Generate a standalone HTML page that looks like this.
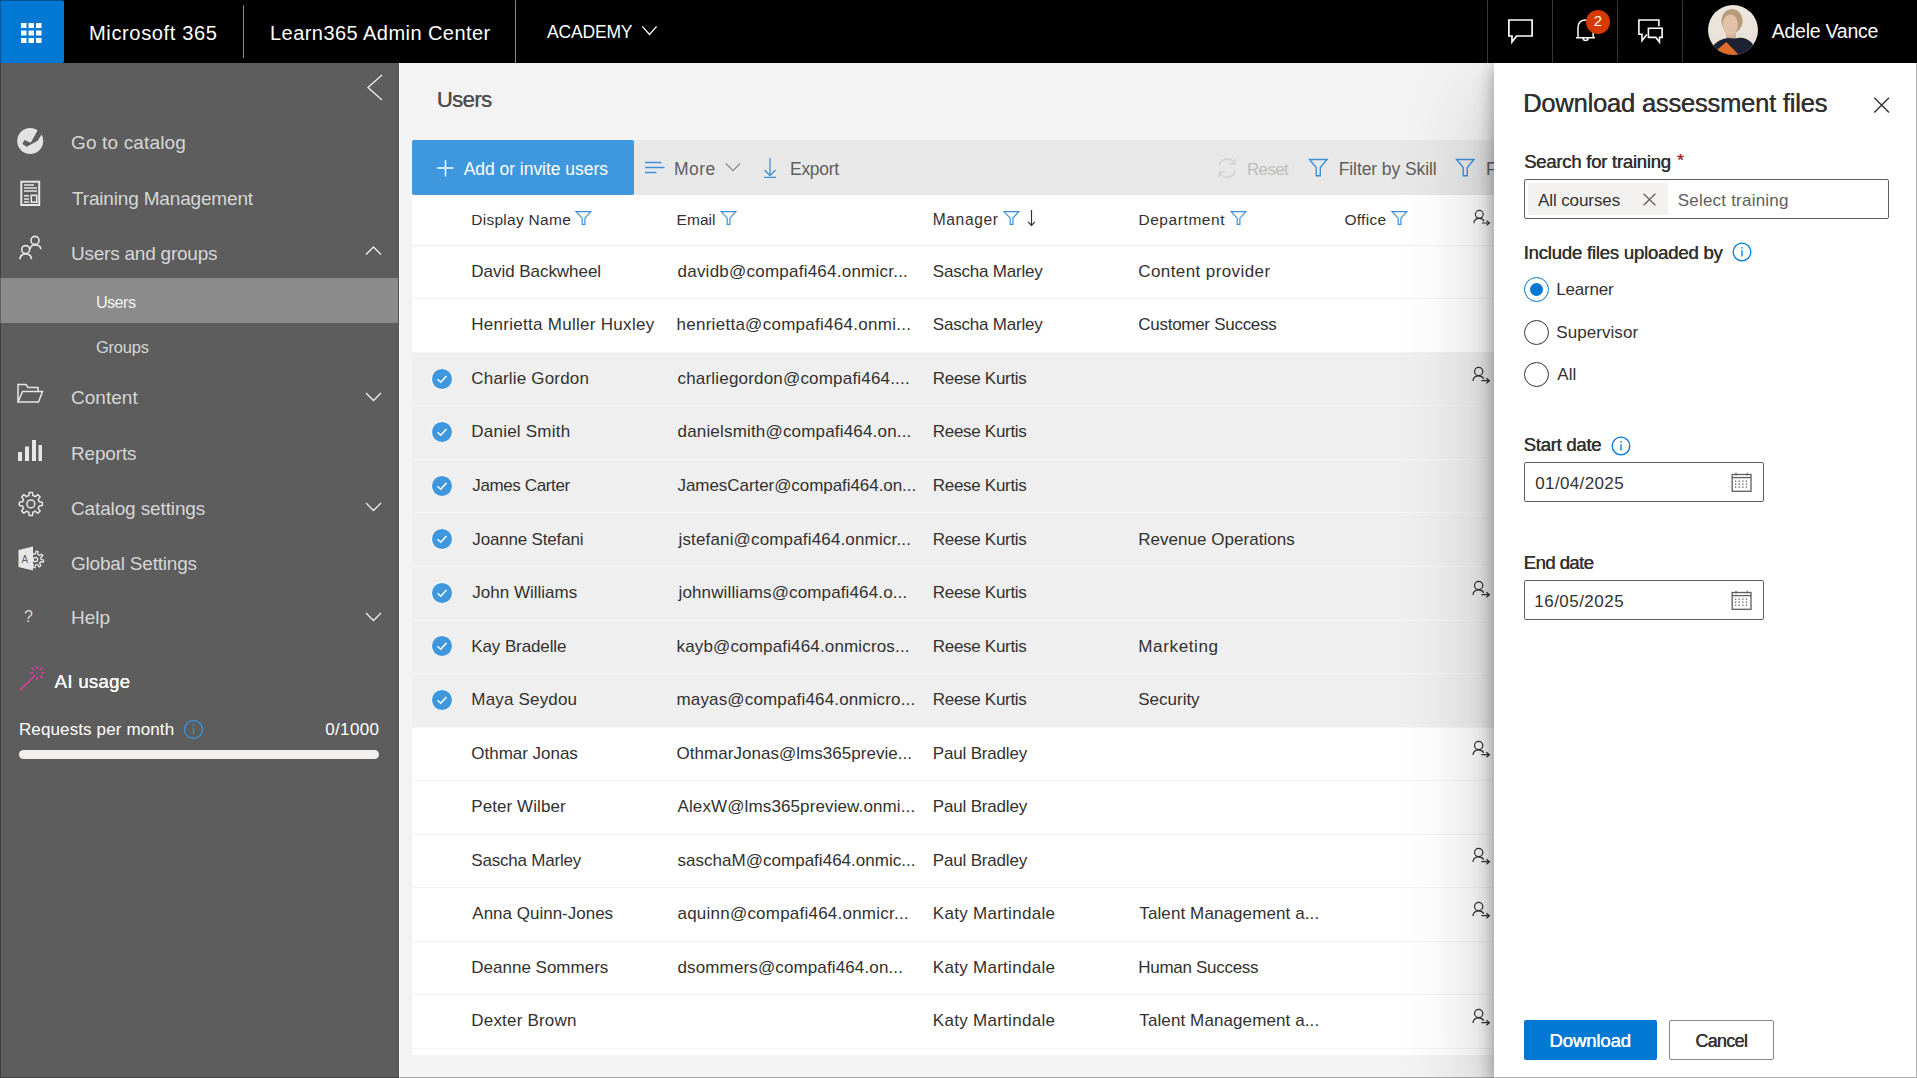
<!DOCTYPE html>
<html><head><meta charset='utf-8'><style>
html,body{margin:0;padding:0;}
body{width:1917px;height:1078px;position:relative;overflow:hidden;background:#fff;font-family:"Liberation Sans", sans-serif;}
.t{position:absolute;white-space:nowrap;line-height:1;font-family:"Liberation Sans", sans-serif;}
svg{display:block}
</style></head><body>
<div style='position:absolute;left:0px;top:0px;width:1917px;height:63px;background:#000;'></div>
<div style='position:absolute;left:0px;top:0px;width:64px;height:63px;background:#0078d4;border-radius:0 2px 2px 0'></div>
<div style='position:absolute;left:0px;top:63px;width:399px;height:1015px;background:#5d5d5d;'></div>
<div style='position:absolute;left:400px;top:63px;width:1094px;height:1015px;background:#f3f3f3;'></div>
<div style='position:absolute;left:243px;top:5px;width:1px;height:53px;background:#8a8a8a;'></div>
<div style='position:absolute;left:515px;top:0px;width:1px;height:63px;background:#8a8a8a;'></div>
<div style='position:absolute;left:1487px;top:0px;width:1px;height:63px;background:#3b3b3b;'></div>
<div style='position:absolute;left:1552px;top:0px;width:1px;height:63px;background:#3b3b3b;'></div>
<div style='position:absolute;left:1617px;top:0px;width:1px;height:63px;background:#3b3b3b;'></div>
<div style='position:absolute;left:1682px;top:0px;width:1px;height:63px;background:#3b3b3b;'></div>
<div style='position:absolute;left:398px;top:63px;width:1px;height:1015px;background:#545454;'></div>
<div style='position:absolute;left:399px;top:63px;width:1px;height:1015px;background:#fcfcfc;'></div>
<div style='position:absolute;left:0px;top:278px;width:398px;height:45px;background:#8b8b8b;'></div>
<div style='position:absolute;left:19px;top:750px;width:360px;height:9px;background:#f1f0ef;border-radius:5px'></div>
<div style='position:absolute;left:412px;top:140px;width:1082px;height:55px;background:#e8e8e8;'></div>
<div style='position:absolute;left:412px;top:195px;width:1082px;height:860px;background:#fff;'></div>
<div style='position:absolute;left:412px;top:140px;width:222px;height:55px;background:#3f97dd;border-radius:2px'></div>
<div style='position:absolute;left:412px;top:245px;width:1082px;height:1px;background:#f0f0f0;'></div>
<div style='position:absolute;left:412px;top:353.06px;width:1082px;height:53.53px;background:#efefef;'></div>
<div style='position:absolute;left:412px;top:406.59px;width:1082px;height:53.53px;background:#efefef;'></div>
<div style='position:absolute;left:412px;top:460.12px;width:1082px;height:53.53px;background:#efefef;'></div>
<div style='position:absolute;left:412px;top:513.6500000000001px;width:1082px;height:53.53px;background:#efefef;'></div>
<div style='position:absolute;left:412px;top:567.1800000000001px;width:1082px;height:53.53px;background:#efefef;'></div>
<div style='position:absolute;left:412px;top:620.71px;width:1082px;height:53.53px;background:#efefef;'></div>
<div style='position:absolute;left:412px;top:674.24px;width:1082px;height:53.53px;background:#efefef;'></div>
<div class='t' style='left:1486.00px;top:161px;font-size:17.5px;color:#605e5c;'>F</div>
<div style='position:absolute;left:412px;top:298px;width:1082px;height:1px;background:#f3f3f3;'></div>
<div style='position:absolute;left:412px;top:352px;width:1082px;height:1px;background:#f3f3f3;'></div>
<div style='position:absolute;left:412px;top:405px;width:1082px;height:1px;background:#f6f6f6;'></div>
<div style='position:absolute;left:412px;top:459px;width:1082px;height:1px;background:#f6f6f6;'></div>
<div style='position:absolute;left:412px;top:512px;width:1082px;height:1px;background:#f6f6f6;'></div>
<div style='position:absolute;left:412px;top:566px;width:1082px;height:1px;background:#f6f6f6;'></div>
<div style='position:absolute;left:412px;top:620px;width:1082px;height:1px;background:#f6f6f6;'></div>
<div style='position:absolute;left:412px;top:673px;width:1082px;height:1px;background:#f6f6f6;'></div>
<div style='position:absolute;left:412px;top:727px;width:1082px;height:1px;background:#f6f6f6;'></div>
<div style='position:absolute;left:412px;top:780px;width:1082px;height:1px;background:#f3f3f3;'></div>
<div style='position:absolute;left:412px;top:834px;width:1082px;height:1px;background:#f3f3f3;'></div>
<div style='position:absolute;left:412px;top:887px;width:1082px;height:1px;background:#f3f3f3;'></div>
<div style='position:absolute;left:412px;top:941px;width:1082px;height:1px;background:#f3f3f3;'></div>
<div style='position:absolute;left:412px;top:994px;width:1082px;height:1px;background:#f3f3f3;'></div>
<div style='position:absolute;left:412px;top:1048px;width:1082px;height:1px;background:#f3f3f3;'></div>
<div style='position:absolute;left:412px;top:1048px;width:1082px;height:1px;background:#f3f3f3;'></div>
<div class='t' style='left:88.99px;top:23px;font-size:20.13px;color:#fff;letter-spacing:0.600px;'>Microsoft 365</div>
<div class='t' style='left:270.00px;top:23px;font-size:20px;color:#fff;letter-spacing:0.450px;'>Learn365 Admin Center</div>
<div class='t' style='left:547.00px;top:24px;font-size:17.5px;color:#fff;letter-spacing:-0.167px;'>ACADEMY</div>
<div class='t' style='left:1771.70px;top:22px;font-size:19.5px;color:#fff;letter-spacing:-0.240px;'>Adele Vance</div>
<div class='t' style='left:71.00px;top:133px;font-size:19px;color:#d6d6d6;letter-spacing:0.150px;'>Go to catalog</div>
<div class='t' style='left:72.00px;top:189px;font-size:19px;color:#d6d6d6;letter-spacing:-0.167px;'>Training Management</div>
<div class='t' style='left:71.00px;top:244px;font-size:19px;color:#d6d6d6;letter-spacing:-0.233px;'>Users and groups</div>
<div class='t' style='left:95.91px;top:294px;font-size:16.3px;color:#f2f2f2;letter-spacing:-0.600px;'>Users</div>
<div class='t' style='left:95.90px;top:339px;font-size:16.5px;color:#d6d6d6;letter-spacing:-0.180px;'>Groups</div>
<div class='t' style='left:71.00px;top:388px;font-size:19px;color:#d6d6d6;letter-spacing:0.033px;'>Content</div>
<div class='t' style='left:71.00px;top:444px;font-size:19px;color:#d6d6d6;letter-spacing:-0.167px;'>Reports</div>
<div class='t' style='left:71.00px;top:499px;font-size:19px;color:#d6d6d6;letter-spacing:-0.133px;'>Catalog settings</div>
<div class='t' style='left:71.00px;top:554px;font-size:19px;color:#d6d6d6;letter-spacing:-0.200px;'>Global Settings</div>
<div class='t' style='left:71.00px;top:608px;font-size:19px;color:#d6d6d6;'>Help</div>
<div class='t' style='left:24.00px;top:609px;font-size:16px;color:#d6d6d6;'>?</div>
<div class='t' style='left:54.60px;top:673px;font-size:18.5px;color:#fff;letter-spacing:0.329px;text-shadow:0.2px 0 0 currentColor;'>AI usage</div>
<div class='t' style='left:18.90px;top:721px;font-size:17px;color:#fff;letter-spacing:0.129px;'>Requests per month</div>
<div class='t' style='left:325.20px;top:721px;font-size:17px;color:#fff;letter-spacing:0.360px;'>0/1000</div>
<div class='t' style='left:436.72px;top:89px;font-size:22.07px;color:#4e4e4e;letter-spacing:-0.600px;text-shadow:0.25px 0 0 currentColor;'>Users</div>
<div class='t' style='left:463.70px;top:161px;font-size:17.5px;color:#fff;letter-spacing:-0.039px;'>Add or invite users</div>
<div class='t' style='left:674.00px;top:161px;font-size:17.5px;color:#605e5c;letter-spacing:0.467px;'>More</div>
<div class='t' style='left:790.00px;top:161px;font-size:17.5px;color:#605e5c;letter-spacing:-0.280px;'>Export</div>
<div class='t' style='left:1247.04px;top:162px;font-size:16.88px;color:#bdbbb9;letter-spacing:-0.600px;'>Reset</div>
<div class='t' style='left:1338.70px;top:161px;font-size:17.5px;color:#605e5c;letter-spacing:-0.086px;'>Filter by Skill</div>
<div class='t' style='left:471.20px;top:212px;font-size:15.5px;color:#323130;letter-spacing:0.282px;'>Display Name</div>
<div class='t' style='left:676.50px;top:212px;font-size:15.5px;color:#323130;letter-spacing:0.075px;'>Email</div>
<div class='t' style='left:932.79px;top:212px;font-size:15.58px;color:#323130;letter-spacing:0.600px;'>Manager</div>
<div class='t' style='left:1138.40px;top:212px;font-size:15.5px;color:#323130;letter-spacing:0.578px;'>Department</div>
<div class='t' style='left:1344.40px;top:212px;font-size:15.5px;color:#323130;letter-spacing:0.320px;'>Office</div>
<div class='t' style='left:471.30px;top:263px;font-size:17px;color:#323130;letter-spacing:-0.043px;'>David Backwheel</div>
<div class='t' style='left:677.50px;top:263px;font-size:17px;color:#323130;letter-spacing:0.235px;'>davidb@compafi464.onmicr...</div>
<div class='t' style='left:932.80px;top:263px;font-size:17px;color:#323130;letter-spacing:-0.208px;'>Sascha Marley</div>
<div class='t' style='left:1138.30px;top:263px;font-size:17px;color:#323130;letter-spacing:0.407px;'>Content provider</div>
<div class='t' style='left:471.30px;top:316px;font-size:17px;color:#323130;letter-spacing:0.282px;'>Henrietta Muller Huxley</div>
<div class='t' style='left:676.50px;top:316px;font-size:17px;color:#323130;letter-spacing:0.274px;'>henrietta@compafi464.onmi...</div>
<div class='t' style='left:932.80px;top:316px;font-size:17px;color:#323130;letter-spacing:-0.208px;'>Sascha Marley</div>
<div class='t' style='left:1138.30px;top:316px;font-size:17px;color:#323130;letter-spacing:-0.280px;'>Customer Success</div>
<div class='t' style='left:471.30px;top:370px;font-size:17px;color:#323130;letter-spacing:0.177px;'>Charlie Gordon</div>
<div class='t' style='left:677.50px;top:370px;font-size:17px;color:#323130;letter-spacing:0.189px;'>charliegordon@compafi464....</div>
<div class='t' style='left:932.80px;top:370px;font-size:17px;color:#323130;letter-spacing:-0.300px;'>Reese Kurtis</div>
<div class='t' style='left:471.30px;top:423px;font-size:17px;color:#323130;letter-spacing:0.227px;'>Daniel Smith</div>
<div class='t' style='left:677.50px;top:423px;font-size:17px;color:#323130;letter-spacing:0.181px;'>danielsmith@compafi464.on...</div>
<div class='t' style='left:932.80px;top:423px;font-size:17px;color:#323130;letter-spacing:-0.300px;'>Reese Kurtis</div>
<div class='t' style='left:472.30px;top:477px;font-size:17px;color:#323130;letter-spacing:-0.382px;'>James Carter</div>
<div class='t' style='left:677.50px;top:477px;font-size:17px;color:#323130;letter-spacing:-0.059px;'>JamesCarter@compafi464.on...</div>
<div class='t' style='left:932.80px;top:477px;font-size:17px;color:#323130;letter-spacing:-0.300px;'>Reese Kurtis</div>
<div class='t' style='left:472.30px;top:531px;font-size:17px;color:#323130;letter-spacing:-0.169px;'>Joanne Stefani</div>
<div class='t' style='left:678.50px;top:531px;font-size:17px;color:#323130;letter-spacing:0.157px;'>jstefani@compafi464.onmicr...</div>
<div class='t' style='left:932.80px;top:531px;font-size:17px;color:#323130;letter-spacing:-0.300px;'>Reese Kurtis</div>
<div class='t' style='left:1138.30px;top:531px;font-size:17px;color:#323130;letter-spacing:0.024px;'>Revenue Operations</div>
<div class='t' style='left:472.30px;top:584px;font-size:17px;color:#323130;'>John Williams</div>
<div class='t' style='left:678.50px;top:584px;font-size:17px;color:#323130;letter-spacing:0.130px;'>johnwilliams@compafi464.o...</div>
<div class='t' style='left:932.80px;top:584px;font-size:17px;color:#323130;letter-spacing:-0.300px;'>Reese Kurtis</div>
<div class='t' style='left:471.30px;top:638px;font-size:17px;color:#323130;letter-spacing:-0.109px;'>Kay Bradelle</div>
<div class='t' style='left:676.50px;top:638px;font-size:17px;color:#323130;letter-spacing:0.158px;'>kayb@compafi464.onmicros...</div>
<div class='t' style='left:932.80px;top:638px;font-size:17px;color:#323130;letter-spacing:-0.300px;'>Reese Kurtis</div>
<div class='t' style='left:1138.29px;top:638px;font-size:17.09px;color:#323130;letter-spacing:0.600px;'>Marketing</div>
<div class='t' style='left:471.30px;top:691px;font-size:17px;color:#323130;letter-spacing:0.180px;'>Maya Seydou</div>
<div class='t' style='left:676.50px;top:691px;font-size:17px;color:#323130;letter-spacing:0.158px;'>mayas@compafi464.onmicro...</div>
<div class='t' style='left:932.80px;top:691px;font-size:17px;color:#323130;letter-spacing:-0.300px;'>Reese Kurtis</div>
<div class='t' style='left:1138.30px;top:691px;font-size:17px;color:#323130;letter-spacing:-0.014px;'>Security</div>
<div class='t' style='left:471.30px;top:745px;font-size:17px;color:#323130;letter-spacing:-0.018px;'>Othmar Jonas</div>
<div class='t' style='left:676.50px;top:745px;font-size:17px;color:#323130;letter-spacing:0.035px;'>OthmarJonas@lms365previe...</div>
<div class='t' style='left:932.80px;top:745px;font-size:17px;color:#323130;letter-spacing:-0.182px;'>Paul Bradley</div>
<div class='t' style='left:471.30px;top:798px;font-size:17px;color:#323130;letter-spacing:0.073px;'>Peter Wilber</div>
<div class='t' style='left:677.50px;top:798px;font-size:17px;color:#323130;letter-spacing:0.119px;'>AlexW@lms365preview.onmi...</div>
<div class='t' style='left:932.80px;top:798px;font-size:17px;color:#323130;letter-spacing:-0.182px;'>Paul Bradley</div>
<div class='t' style='left:471.30px;top:852px;font-size:17px;color:#323130;letter-spacing:-0.200px;'>Sascha Marley</div>
<div class='t' style='left:677.50px;top:852px;font-size:17px;color:#323130;letter-spacing:0.023px;'>saschaM@compafi464.onmic...</div>
<div class='t' style='left:932.80px;top:852px;font-size:17px;color:#323130;letter-spacing:-0.182px;'>Paul Bradley</div>
<div class='t' style='left:472.30px;top:905px;font-size:17px;color:#323130;'>Anna Quinn-Jones</div>
<div class='t' style='left:677.50px;top:905px;font-size:17px;color:#323130;letter-spacing:0.227px;'>aquinn@compafi464.onmicr...</div>
<div class='t' style='left:932.80px;top:905px;font-size:17px;color:#323130;letter-spacing:0.286px;'>Katy Martindale</div>
<div class='t' style='left:1139.30px;top:905px;font-size:17px;color:#323130;letter-spacing:0.105px;'>Talent Management a...</div>
<div class='t' style='left:471.30px;top:959px;font-size:17px;color:#323130;'>Deanne Sommers</div>
<div class='t' style='left:677.50px;top:959px;font-size:17px;color:#323130;letter-spacing:0.129px;'>dsommers@compafi464.on...</div>
<div class='t' style='left:932.80px;top:959px;font-size:17px;color:#323130;letter-spacing:0.286px;'>Katy Martindale</div>
<div class='t' style='left:1138.30px;top:959px;font-size:17px;color:#323130;letter-spacing:-0.292px;'>Human Success</div>
<div class='t' style='left:471.30px;top:1012px;font-size:17px;color:#323130;letter-spacing:0.191px;'>Dexter Brown</div>
<div class='t' style='left:932.80px;top:1012px;font-size:17px;color:#323130;letter-spacing:0.286px;'>Katy Martindale</div>
<div class='t' style='left:1139.30px;top:1012px;font-size:17px;color:#323130;letter-spacing:0.105px;'>Talent Management a...</div>
<svg style='position:absolute;left:0px;top:0px;overflow:visible;' width='64' height='63' viewBox='0 0 64 63'><rect x='21' y='23' width='5.5' height='5' fill='#fff'/><rect x='28.5' y='23' width='5.5' height='5' fill='#fff'/><rect x='36' y='23' width='5.5' height='5' fill='#fff'/><rect x='21' y='30.5' width='5.5' height='5' fill='#fff'/><rect x='28.5' y='30.5' width='5.5' height='5' fill='#fff'/><rect x='36' y='30.5' width='5.5' height='5' fill='#fff'/><rect x='21' y='38' width='5.5' height='5' fill='#fff'/><rect x='28.5' y='38' width='5.5' height='5' fill='#fff'/><rect x='36' y='38' width='5.5' height='5' fill='#fff'/></svg>
<svg style='position:absolute;left:640px;top:24px;overflow:visible;' width='20' height='14' viewBox='0 0 20 14'><polyline points='2.3,2.4 9.5,10.4 16.6,2.4' fill='none' stroke='#fff' stroke-width='1.3'/></svg>
<svg style='position:absolute;left:1500px;top:12px;overflow:visible;' width='40' height='36' viewBox='0 0 40 36'><path d='M8.9 8 H32.1 V24 H16.5 L12 29.9 V24 H8.9 Z' fill='none' stroke='#fff' stroke-width='1.7' stroke-linejoin='miter'/></svg>
<svg style='position:absolute;left:1570px;top:12px;overflow:visible;' width='36' height='36' viewBox='0 0 36 36'><path d='M6 25.8 H25 M8 25.5 V16 Q8 8 15.6 8 Q23.2 8 23.2 16 V25.5 M13.1 26 A2.5 2.5 0 0 0 18.1 26' fill='none' stroke='#fff' stroke-width='1.5'/></svg>
<svg style='position:absolute;left:1630px;top:12px;overflow:visible;' width='40' height='36' viewBox='0 0 40 36'><path d='M28.9 14.2 V8 H8.9 V22.3 H12 V28.6 L16.8 22.5' fill='none' stroke='#fff' stroke-width='1.6'/><path d='M18.4 16.2 H32.1 V25.4 H29.5 V30.1 L25.8 25.4 H18.4 Z' fill='none' stroke='#fff' stroke-width='1.6'/></svg>
<svg style='position:absolute;left:1708px;top:5px;overflow:visible;' width='50' height='50' viewBox='0 0 50 50'><defs><clipPath id='av'><circle cx='25' cy='25' r='25'/></clipPath></defs><g clip-path='url(#av)'><rect width='50' height='50' fill='#ece6dc'/><ellipse cx='24' cy='16' rx='10.5' ry='12' fill='#b89d7c'/><rect x='18' y='27' width='10' height='10' fill='#d9b49a'/><ellipse cx='22.3' cy='20' rx='7.6' ry='10.5' fill='#e3c3aa'/><path d='M4 42 Q10 34 20 33 L27 33.5 Q37 31 44 38 L50 50 L0 50 Z' fill='#1e2236'/><path d='M10 44 L18.3 37 L30 49 L29 52 L10 52 Z' fill='#e8722a'/></g></svg>
<svg style='position:absolute;left:360px;top:68px;overflow:visible;' width='30' height='38' viewBox='0 0 30 38'><polyline points='22,7 8,19.5 22,32' fill='none' stroke='#e4eaf0' stroke-width='1.4'/></svg>
<svg style='position:absolute;left:365px;top:245.5px;overflow:visible;' width='18' height='10' viewBox='0 0 18 10'><polyline points='1,8.5 8.5,1 16,8.5' fill='none' stroke='#f0f0f0' stroke-width='1.3'/></svg>
<svg style='position:absolute;left:365px;top:391.5px;overflow:visible;' width='18' height='10' viewBox='0 0 18 10'><polyline points='1,1 8.5,8.5 16,1' fill='none' stroke='#f0f0f0' stroke-width='1.3'/></svg>
<svg style='position:absolute;left:365px;top:501.5px;overflow:visible;' width='18' height='10' viewBox='0 0 18 10'><polyline points='1,1 8.5,8.5 16,1' fill='none' stroke='#f0f0f0' stroke-width='1.3'/></svg>
<svg style='position:absolute;left:365px;top:611.5px;overflow:visible;' width='18' height='10' viewBox='0 0 18 10'><polyline points='1,1 8.5,8.5 16,1' fill='none' stroke='#f0f0f0' stroke-width='1.3'/></svg>
<svg style='position:absolute;left:17px;top:128px;overflow:visible;' width='27' height='27' viewBox='0 0 27 27'><circle cx='13.2' cy='13' r='13' fill='#e2e2e2'/><polygon points='20.7,2.3 13.7,14.7 7.4,12 5.4,16 9.7,18.7 20.7,12.7 24.4,6.7 31,5 27,-3' fill='#5d5d5d'/></svg>
<svg style='position:absolute;left:20px;top:180px;overflow:visible;' width='22' height='27' viewBox='0 0 22 27'><rect x='1.3' y='1.7' width='17.9' height='23.3' fill='none' stroke='#e6e6e6' stroke-width='2'/><path d='M4 5 H14 M4 8 H17 M4 11.1 H17 M4 15.8 H9 M4 18.9 H9 M4 22 H9' stroke='#e6e6e6' stroke-width='1.5'/><rect x='11.3' y='15.3' width='5.4' height='6.9' fill='none' stroke='#e6e6e6' stroke-width='1.6'/></svg>
<svg style='position:absolute;left:18px;top:235px;overflow:visible;' width='26' height='26' viewBox='0 0 26 26'><circle cx='7.7' cy='14.6' r='4' fill='none' stroke='#e6e6e6' stroke-width='1.6'/><path d='M2 24.3 Q2 19 7.7 19 Q13.4 19 13.4 24.3' fill='none' stroke='#e6e6e6' stroke-width='1.6'/><circle cx='17' cy='5.4' r='4' fill='none' stroke='#e6e6e6' stroke-width='1.6'/><path d='M12.2 14 Q12.5 10 17 10 Q22.8 10 22.8 14.2' fill='none' stroke='#e6e6e6' stroke-width='1.6'/></svg>
<svg style='position:absolute;left:17px;top:383px;overflow:visible;' width='28' height='22' viewBox='0 0 28 22'><path d='M1 19 V1.5 H9 L11 4.5 H21 V8' fill='none' stroke='#e6e6e6' stroke-width='1.5'/><path d='M1 19 L5.5 8.5 H25.5 L21.5 19 Z' fill='none' stroke='#e6e6e6' stroke-width='1.5'/></svg>
<svg style='position:absolute;left:17px;top:439px;overflow:visible;' width='27' height='23' viewBox='0 0 27 23'><rect x='1' y='13' width='4' height='9' fill='#e6e6e6'/><rect x='8' y='7.5' width='4' height='14.5' fill='#e6e6e6'/><rect x='15' y='1' width='4' height='21' fill='#e6e6e6'/><rect x='21.5' y='6' width='3.5' height='16' fill='#e6e6e6'/></svg>
<svg style='position:absolute;left:17.5px;top:490.5px;overflow:visible;' width='27' height='27' viewBox='0 0 27 27'><polygon points='21.20,10.86 24.34,11.28 24.34,14.52 21.20,14.94 20.20,17.36 22.12,19.88 19.83,22.17 17.31,20.25 14.89,21.25 14.47,24.39 11.23,24.39 10.81,21.25 8.39,20.25 5.87,22.17 3.58,19.88 5.50,17.36 4.50,14.94 1.36,14.52 1.36,11.28 4.50,10.86 5.50,8.44 3.58,5.92 5.87,3.63 8.39,5.55 10.81,4.55 11.23,1.41 14.47,1.41 14.89,4.55 17.31,5.55 19.83,3.63 22.12,5.92 20.20,8.44' fill='none' stroke='#e6e6e6' stroke-width='1.5' stroke-linejoin='round'/><circle cx='12.85' cy='12.9' r='3.9' fill='none' stroke='#e6e6e6' stroke-width='1.5'/></svg>
<svg style='position:absolute;left:17.5px;top:545.5px;overflow:visible;' width='27' height='27' viewBox='0 0 27 27'><polygon points='23.10,13.39 25.67,14.16 25.28,16.08 22.61,15.78 21.54,17.38 22.82,19.74 21.18,20.83 19.50,18.73 17.61,19.10 16.84,21.67 14.92,21.28 15.22,18.61 13.62,17.54 11.26,18.82 10.17,17.18 12.27,15.50 11.90,13.61 9.33,12.84 9.72,10.92 12.39,11.22 13.46,9.62 12.18,7.26 13.82,6.17 15.50,8.27 17.39,7.90 18.16,5.33 20.08,5.72 19.78,8.39 21.38,9.46 23.74,8.18 24.83,9.82 22.73,11.50' fill='none' stroke='#e6e6e6' stroke-width='1.3'/><circle cx='17.5' cy='13.5' r='2.2' fill='none' stroke='#e6e6e6' stroke-width='1.3'/><path d='M0.5 4 L15 0.5 V24.5 L0.5 21 Z' fill='#e6e6e6'/><text x='3.5' y='17' font-family='Liberation Sans' font-size='10' fill='#5d5d5d'>A</text></svg>
<svg style='position:absolute;left:18px;top:665px;overflow:visible;' width='28' height='28' viewBox='0 0 28 28'><path d='M1.9 25.3 L17 10.2' stroke='#de3f9f' stroke-width='1.6'/><path d='M19 0.8 V4 M19 11.8 V15 M11.8 7.9 H15.2 M22.8 7.9 H26.5 M21.8 5 L24.5 2.4 M21.8 10.8 L24.5 13.4 M16.2 5 L13.5 2.4' stroke='#de3f9f' stroke-width='1.5'/><circle cx='19' cy='7.9' r='0.7' fill='#de3f9f'/></svg>
<svg style='position:absolute;left:183px;top:719px;overflow:visible;' width='21' height='21' viewBox='0 0 21 21'><circle cx='10.5' cy='10.5' r='9' fill='none' stroke='#3d8fd9' stroke-width='1.4'/><path d='M10.5 8.5 V15' stroke='#3d8fd9' stroke-width='1.3'/><circle cx='10.5' cy='6.2' r='0.9' fill='#3d8fd9'/></svg>
<svg style='position:absolute;left:436px;top:159px;overflow:visible;' width='19' height='19' viewBox='0 0 19 19'><path d='M9.5 1 V17.5 M1 9 H17.5' stroke='#fff' stroke-width='1.5'/></svg>
<svg style='position:absolute;left:643px;top:160px;overflow:visible;' width='24' height='16' viewBox='0 0 24 16'><path d='M2 2.5 H18.5 M2 7.5 H21.5 M2 12.5 H13.5' stroke='#3d90d8' stroke-width='1.3'/></svg>
<svg style='position:absolute;left:724px;top:161px;overflow:visible;' width='18' height='12' viewBox='0 0 18 12'><polyline points='2,2.5 9,9.7 16,2.5' fill='none' stroke='#8a8886' stroke-width='1.2'/></svg>
<svg style='position:absolute;left:762px;top:156px;overflow:visible;' width='16' height='24' viewBox='0 0 16 24'><path d='M8 2 V19.5 M2.5 14 L8 19.5 L13.5 14 M2 21.3 H14' fill='none' stroke='#3d90d8' stroke-width='1.3'/></svg>
<svg style='position:absolute;left:1215px;top:156px;overflow:visible;' width='24' height='24' viewBox='0 0 24 24'><path d='M4 9.5 A8.3 8.3 0 0 1 19.5 7.5 M20 14.5 A8.3 8.3 0 0 1 4.5 16.5' fill='none' stroke='#d2d0ce' stroke-width='1.4'/><path d='M19.8 2.5 V8 H14.5 M4.2 21.5 V16 H9.5' fill='none' stroke='#d2d0ce' stroke-width='1.4'/></svg>
<svg style='position:absolute;left:1308px;top:158px;overflow:visible;' width='22' height='20' viewBox='0 0 22 20'><path d='M1.5 1.5 H19 L12.3 9.5 V17.8 H8.2 V9.5 Z' fill='none' stroke='#3d90d8' stroke-width='1.4' stroke-linejoin='miter'/></svg>
<svg style='position:absolute;left:1455px;top:158px;overflow:visible;' width='22' height='20' viewBox='0 0 22 20'><path d='M1.5 1.5 H19 L12.3 9.5 V17.8 H8.2 V9.5 Z' fill='none' stroke='#3d90d8' stroke-width='1.4' stroke-linejoin='miter'/></svg>
<svg style='position:absolute;left:575px;top:210px;overflow:visible;' width='18' height='16' viewBox='0 0 18 16'><path d='M1.1 1.6 H15.8 L9.9 8.2 V14.4 H7.2 V8.2 Z' fill='none' stroke='#3d90d8' stroke-width='1.2'/></svg>
<svg style='position:absolute;left:719.5px;top:210px;overflow:visible;' width='18' height='16' viewBox='0 0 18 16'><path d='M1.1 1.6 H15.8 L9.9 8.2 V14.4 H7.2 V8.2 Z' fill='none' stroke='#3d90d8' stroke-width='1.2'/></svg>
<svg style='position:absolute;left:1002.5px;top:210px;overflow:visible;' width='18' height='16' viewBox='0 0 18 16'><path d='M1.1 1.6 H15.8 L9.9 8.2 V14.4 H7.2 V8.2 Z' fill='none' stroke='#3d90d8' stroke-width='1.2'/></svg>
<svg style='position:absolute;left:1229.5px;top:210px;overflow:visible;' width='18' height='16' viewBox='0 0 18 16'><path d='M1.1 1.6 H15.8 L9.9 8.2 V14.4 H7.2 V8.2 Z' fill='none' stroke='#3d90d8' stroke-width='1.2'/></svg>
<svg style='position:absolute;left:1391.3px;top:210px;overflow:visible;' width='18' height='16' viewBox='0 0 18 16'><path d='M1.1 1.6 H15.8 L9.9 8.2 V14.4 H7.2 V8.2 Z' fill='none' stroke='#3d90d8' stroke-width='1.2'/></svg>
<svg style='position:absolute;left:1025px;top:209px;overflow:visible;' width='14' height='18' viewBox='0 0 14 18'><path d='M6.5 1 V16.3 M3 12.8 L6.5 16.3 L10 12.8' fill='none' stroke='#323130' stroke-width='1.2'/></svg>
<svg style='position:absolute;left:1472.5px;top:210.5px;overflow:visible;' width='20' height='18' viewBox='0 0 20 18'><g transform='scale(1.0)'><circle cx='6.3' cy='3.3' r='3.9' fill='none' stroke='#323130' stroke-width='1.15'/><path d='M0.9 12.3 Q1.3 7.4 6.3 7.4 Q9.6 7.4 11.1 10.2' fill='none' stroke='#323130' stroke-width='1.15'/><path d='M8.9 12 H16.4 M13.6 9.6 L16.4 12 L13.6 14.4' fill='none' stroke='#323130' stroke-width='1.15'/></g></svg>
<div style='position:absolute;left:430.7px;top:367.52px;width:20px;height:20px;border-radius:50%;background:#3f97dd;border:1px solid #fff;'></div>
<svg style='position:absolute;left:1472.3px;top:367.56px;overflow:visible;' width='20' height='18' viewBox='0 0 20 18'><g transform='scale(1.06)'><circle cx='6.3' cy='3.3' r='3.9' fill='none' stroke='#323130' stroke-width='1.15'/><path d='M0.9 12.3 Q1.3 7.4 6.3 7.4 Q9.6 7.4 11.1 10.2' fill='none' stroke='#323130' stroke-width='1.15'/><path d='M8.9 12 H16.4 M13.6 9.6 L16.4 12 L13.6 14.4' fill='none' stroke='#323130' stroke-width='1.15'/></g></svg>
<div style='position:absolute;left:430.7px;top:421.05px;width:20px;height:20px;border-radius:50%;background:#3f97dd;border:1px solid #fff;'></div>
<div style='position:absolute;left:430.7px;top:474.58px;width:20px;height:20px;border-radius:50%;background:#3f97dd;border:1px solid #fff;'></div>
<div style='position:absolute;left:430.7px;top:528.12px;width:20px;height:20px;border-radius:50%;background:#3f97dd;border:1px solid #fff;'></div>
<div style='position:absolute;left:430.7px;top:581.64px;width:20px;height:20px;border-radius:50%;background:#3f97dd;border:1px solid #fff;'></div>
<svg style='position:absolute;left:1472.3px;top:581.6800000000001px;overflow:visible;' width='20' height='18' viewBox='0 0 20 18'><g transform='scale(1.06)'><circle cx='6.3' cy='3.3' r='3.9' fill='none' stroke='#323130' stroke-width='1.15'/><path d='M0.9 12.3 Q1.3 7.4 6.3 7.4 Q9.6 7.4 11.1 10.2' fill='none' stroke='#323130' stroke-width='1.15'/><path d='M8.9 12 H16.4 M13.6 9.6 L16.4 12 L13.6 14.4' fill='none' stroke='#323130' stroke-width='1.15'/></g></svg>
<div style='position:absolute;left:430.7px;top:635.17px;width:20px;height:20px;border-radius:50%;background:#3f97dd;border:1px solid #fff;'></div>
<div style='position:absolute;left:430.7px;top:688.70px;width:20px;height:20px;border-radius:50%;background:#3f97dd;border:1px solid #fff;'></div>
<svg style='position:absolute;left:1472.3px;top:742.27px;overflow:visible;' width='20' height='18' viewBox='0 0 20 18'><g transform='scale(1.06)'><circle cx='6.3' cy='3.3' r='3.9' fill='none' stroke='#323130' stroke-width='1.15'/><path d='M0.9 12.3 Q1.3 7.4 6.3 7.4 Q9.6 7.4 11.1 10.2' fill='none' stroke='#323130' stroke-width='1.15'/><path d='M8.9 12 H16.4 M13.6 9.6 L16.4 12 L13.6 14.4' fill='none' stroke='#323130' stroke-width='1.15'/></g></svg>
<svg style='position:absolute;left:1472.3px;top:849.3300000000002px;overflow:visible;' width='20' height='18' viewBox='0 0 20 18'><g transform='scale(1.06)'><circle cx='6.3' cy='3.3' r='3.9' fill='none' stroke='#323130' stroke-width='1.15'/><path d='M0.9 12.3 Q1.3 7.4 6.3 7.4 Q9.6 7.4 11.1 10.2' fill='none' stroke='#323130' stroke-width='1.15'/><path d='M8.9 12 H16.4 M13.6 9.6 L16.4 12 L13.6 14.4' fill='none' stroke='#323130' stroke-width='1.15'/></g></svg>
<svg style='position:absolute;left:1472.3px;top:902.8600000000001px;overflow:visible;' width='20' height='18' viewBox='0 0 20 18'><g transform='scale(1.06)'><circle cx='6.3' cy='3.3' r='3.9' fill='none' stroke='#323130' stroke-width='1.15'/><path d='M0.9 12.3 Q1.3 7.4 6.3 7.4 Q9.6 7.4 11.1 10.2' fill='none' stroke='#323130' stroke-width='1.15'/><path d='M8.9 12 H16.4 M13.6 9.6 L16.4 12 L13.6 14.4' fill='none' stroke='#323130' stroke-width='1.15'/></g></svg>
<svg style='position:absolute;left:1472.3px;top:1009.9200000000001px;overflow:visible;' width='20' height='18' viewBox='0 0 20 18'><g transform='scale(1.06)'><circle cx='6.3' cy='3.3' r='3.9' fill='none' stroke='#323130' stroke-width='1.15'/><path d='M0.9 12.3 Q1.3 7.4 6.3 7.4 Q9.6 7.4 11.1 10.2' fill='none' stroke='#323130' stroke-width='1.15'/><path d='M8.9 12 H16.4 M13.6 9.6 L16.4 12 L13.6 14.4' fill='none' stroke='#323130' stroke-width='1.15'/></g></svg>
<div style='position:absolute;left:1586px;top:9.5px;width:24px;height:24px;border-radius:50%;background:#d83b01;'></div>
<svg style='position:absolute;left:430.7px;top:367.825px;overflow:visible;' width='22' height='22' viewBox='0 0 22 22'><polyline points='6.5,11.2 9.7,14.2 15.5,8' fill='none' stroke='#fff' stroke-width='1.5'/></svg>
<svg style='position:absolute;left:430.7px;top:421.35499999999996px;overflow:visible;' width='22' height='22' viewBox='0 0 22 22'><polyline points='6.5,11.2 9.7,14.2 15.5,8' fill='none' stroke='#fff' stroke-width='1.5'/></svg>
<svg style='position:absolute;left:430.7px;top:474.885px;overflow:visible;' width='22' height='22' viewBox='0 0 22 22'><polyline points='6.5,11.2 9.7,14.2 15.5,8' fill='none' stroke='#fff' stroke-width='1.5'/></svg>
<svg style='position:absolute;left:430.7px;top:528.4150000000001px;overflow:visible;' width='22' height='22' viewBox='0 0 22 22'><polyline points='6.5,11.2 9.7,14.2 15.5,8' fill='none' stroke='#fff' stroke-width='1.5'/></svg>
<svg style='position:absolute;left:430.7px;top:581.945px;overflow:visible;' width='22' height='22' viewBox='0 0 22 22'><polyline points='6.5,11.2 9.7,14.2 15.5,8' fill='none' stroke='#fff' stroke-width='1.5'/></svg>
<svg style='position:absolute;left:430.7px;top:635.475px;overflow:visible;' width='22' height='22' viewBox='0 0 22 22'><polyline points='6.5,11.2 9.7,14.2 15.5,8' fill='none' stroke='#fff' stroke-width='1.5'/></svg>
<svg style='position:absolute;left:430.7px;top:689.005px;overflow:visible;' width='22' height='22' viewBox='0 0 22 22'><polyline points='6.5,11.2 9.7,14.2 15.5,8' fill='none' stroke='#fff' stroke-width='1.5'/></svg>
<div class='t' style='left:1593.80px;top:13px;font-size:15px;color:#fff;'>2</div>
<div style='position:absolute;left:1494px;top:63px;width:423px;height:1015px;background:#fff;box-shadow:0 38px 86px rgba(0,0,0,0.24), 0 7px 22px rgba(0,0,0,0.20), 0 4px 14px rgba(0,0,0,0.2);'></div>
<svg style='position:absolute;left:1872px;top:96px;overflow:visible;' width='19' height='19' viewBox='0 0 19 19'><path d='M2.3 1.7 L17 16.4 M17 1.7 L2.3 16.4' stroke='#323130' stroke-width='1.4'/></svg>
<div style='position:absolute;left:1524px;top:179px;width:363px;height:38px;border:1px solid #605e5c;border-radius:2px;'></div>
<div style='position:absolute;left:1528.4px;top:183px;width:139.6px;height:31.7px;background:#f3f2f1;border-radius:2px'></div>
<svg style='position:absolute;left:1732.4px;top:242.4px;overflow:visible;' width='21' height='21' viewBox='0 0 21 21'><circle cx='10' cy='10' r='8.8' fill='none' stroke='#0078d4' stroke-width='1.3'/><path d='M10 8.3 V14.5' stroke='#0078d4' stroke-width='1.3'/><circle cx='10' cy='5.8' r='0.85' fill='#0078d4'/></svg>
<div style='position:absolute;left:1524px;top:277px;width:23px;height:23px;border-radius:50%;border:1px solid #0078d4;'></div>
<div style='position:absolute;left:1529.8px;top:282.7px;width:13.4px;height:13.4px;border-radius:50%;background:#0078d4;'></div>
<div style='position:absolute;left:1524px;top:320.2px;width:23px;height:23px;border-radius:50%;border:1px solid #323130;'></div>
<div style='position:absolute;left:1524px;top:362.2px;width:23px;height:23px;border-radius:50%;border:1px solid #323130;'></div>
<svg style='position:absolute;left:1611.3px;top:435.5px;overflow:visible;' width='21' height='21' viewBox='0 0 21 21'><circle cx='10' cy='10' r='8.8' fill='none' stroke='#0078d4' stroke-width='1.3'/><path d='M10 8.3 V14.5' stroke='#0078d4' stroke-width='1.3'/><circle cx='10' cy='5.8' r='0.85' fill='#0078d4'/></svg>
<div style='position:absolute;left:1524px;top:462px;width:238px;height:38px;border:1px solid #605e5c;border-radius:2px;'></div>
<svg style='position:absolute;left:1731px;top:472px;overflow:visible;' width='22' height='22' viewBox='0 0 22 22'><rect x='1.2' y='2.5' width='18.8' height='16.8' fill='none' stroke='#605e5c' stroke-width='1.3'/><path d='M1.2 5.6 H20' stroke='#605e5c' stroke-width='1.3'/><path d='M5 0.8 V3.5 M16.2 0.8 V3.5' stroke='#605e5c' stroke-width='1.1'/><rect x='4.0' y='8.5' width='1.3' height='1.3' fill='#605e5c'/><rect x='7.6' y='8.5' width='1.3' height='1.3' fill='#605e5c'/><rect x='11.2' y='8.5' width='1.3' height='1.3' fill='#605e5c'/><rect x='14.8' y='8.5' width='1.3' height='1.3' fill='#605e5c'/><rect x='4.0' y='11.5' width='1.3' height='1.3' fill='#605e5c'/><rect x='7.6' y='11.5' width='1.3' height='1.3' fill='#605e5c'/><rect x='11.2' y='11.5' width='1.3' height='1.3' fill='#605e5c'/><rect x='14.8' y='11.5' width='1.3' height='1.3' fill='#605e5c'/><rect x='4.0' y='14.5' width='1.3' height='1.3' fill='#605e5c'/><rect x='7.6' y='14.5' width='1.3' height='1.3' fill='#605e5c'/><rect x='11.2' y='14.5' width='1.3' height='1.3' fill='#605e5c'/><rect x='14.8' y='14.5' width='1.3' height='1.3' fill='#605e5c'/></svg>
<div style='position:absolute;left:1524px;top:580.4px;width:238px;height:38px;border:1px solid #605e5c;border-radius:2px;'></div>
<svg style='position:absolute;left:1731px;top:590.4px;overflow:visible;' width='22' height='22' viewBox='0 0 22 22'><rect x='1.2' y='2.5' width='18.8' height='16.8' fill='none' stroke='#605e5c' stroke-width='1.3'/><path d='M1.2 5.6 H20' stroke='#605e5c' stroke-width='1.3'/><path d='M5 0.8 V3.5 M16.2 0.8 V3.5' stroke='#605e5c' stroke-width='1.1'/><rect x='4.0' y='8.5' width='1.3' height='1.3' fill='#605e5c'/><rect x='7.6' y='8.5' width='1.3' height='1.3' fill='#605e5c'/><rect x='11.2' y='8.5' width='1.3' height='1.3' fill='#605e5c'/><rect x='14.8' y='8.5' width='1.3' height='1.3' fill='#605e5c'/><rect x='4.0' y='11.5' width='1.3' height='1.3' fill='#605e5c'/><rect x='7.6' y='11.5' width='1.3' height='1.3' fill='#605e5c'/><rect x='11.2' y='11.5' width='1.3' height='1.3' fill='#605e5c'/><rect x='14.8' y='11.5' width='1.3' height='1.3' fill='#605e5c'/><rect x='4.0' y='14.5' width='1.3' height='1.3' fill='#605e5c'/><rect x='7.6' y='14.5' width='1.3' height='1.3' fill='#605e5c'/><rect x='11.2' y='14.5' width='1.3' height='1.3' fill='#605e5c'/><rect x='14.8' y='14.5' width='1.3' height='1.3' fill='#605e5c'/></svg>
<div style='position:absolute;left:1524px;top:1020px;width:133px;height:40px;background:#0078d4;border-radius:2px'></div>
<div style='position:absolute;left:1669px;top:1020px;width:103px;height:38px;border:1px solid #8a8886;border-radius:2px;background:#fff'></div>
<div class='t' style='left:1523.00px;top:91px;font-size:25.5px;color:#323130;letter-spacing:-0.196px;text-shadow:0.4px 0 0 currentColor;'>Download assessment files</div>
<div class='t' style='left:1524.00px;top:153px;font-size:18.5px;color:#323130;letter-spacing:-0.239px;text-shadow:0.4px 0 0 currentColor;'>Search for training</div>
<div class='t' style='left:1677.00px;top:152px;font-size:17px;color:#a4262c;text-shadow:0.4px 0 0 currentColor;'>*</div>
<div class='t' style='left:1523.50px;top:244px;font-size:18.5px;color:#323130;letter-spacing:-0.188px;text-shadow:0.4px 0 0 currentColor;'>Include files uploaded by</div>
<div class='t' style='left:1556.30px;top:281px;font-size:17px;color:#323130;letter-spacing:-0.217px;'>Learner</div>
<div class='t' style='left:1556.30px;top:324px;font-size:17px;color:#323130;letter-spacing:0.056px;'>Supervisor</div>
<div class='t' style='left:1557.30px;top:366px;font-size:17px;color:#323130;letter-spacing:0.100px;'>All</div>
<div class='t' style='left:1523.60px;top:436px;font-size:18.5px;color:#323130;letter-spacing:-0.267px;text-shadow:0.4px 0 0 currentColor;'>Start date</div>
<div class='t' style='left:1535.30px;top:475px;font-size:17px;color:#323130;letter-spacing:0.356px;'>01/04/2025</div>
<div class='t' style='left:1523.60px;top:554px;font-size:18.5px;color:#323130;letter-spacing:-0.543px;text-shadow:0.4px 0 0 currentColor;'>End date</div>
<div class='t' style='left:1534.30px;top:593px;font-size:17px;color:#323130;letter-spacing:0.467px;'>16/05/2025</div>
<svg style='position:absolute;left:1641px;top:191px;overflow:visible;' width='17' height='17' viewBox='0 0 17 17'><path d='M2.6 2.8 L14.4 14.3 M14.4 2.8 L2.6 14.3' stroke='#605e5c' stroke-width='1.2'/></svg>
<div class='t' style='left:1538.00px;top:192px;font-size:17px;color:#323130;letter-spacing:-0.100px;'>All courses</div>
<div class='t' style='left:1677.70px;top:192px;font-size:17px;color:#605e5c;letter-spacing:0.214px;'>Select training</div>
<div class='t' style='left:1549.30px;top:1032px;font-size:18.5px;color:#fff;letter-spacing:-0.100px;text-shadow:0.4px 0 0 currentColor;'>Download</div>
<div class='t' style='left:1695.24px;top:1033px;font-size:17.84px;color:#323130;letter-spacing:-0.600px;text-shadow:0.4px 0 0 currentColor;'>Cancel</div>
<div style='position:absolute;left:0;top:0;width:1915px;height:1076px;border:1px solid rgba(0,0,0,0.3);pointer-events:none'></div>
</body></html>
